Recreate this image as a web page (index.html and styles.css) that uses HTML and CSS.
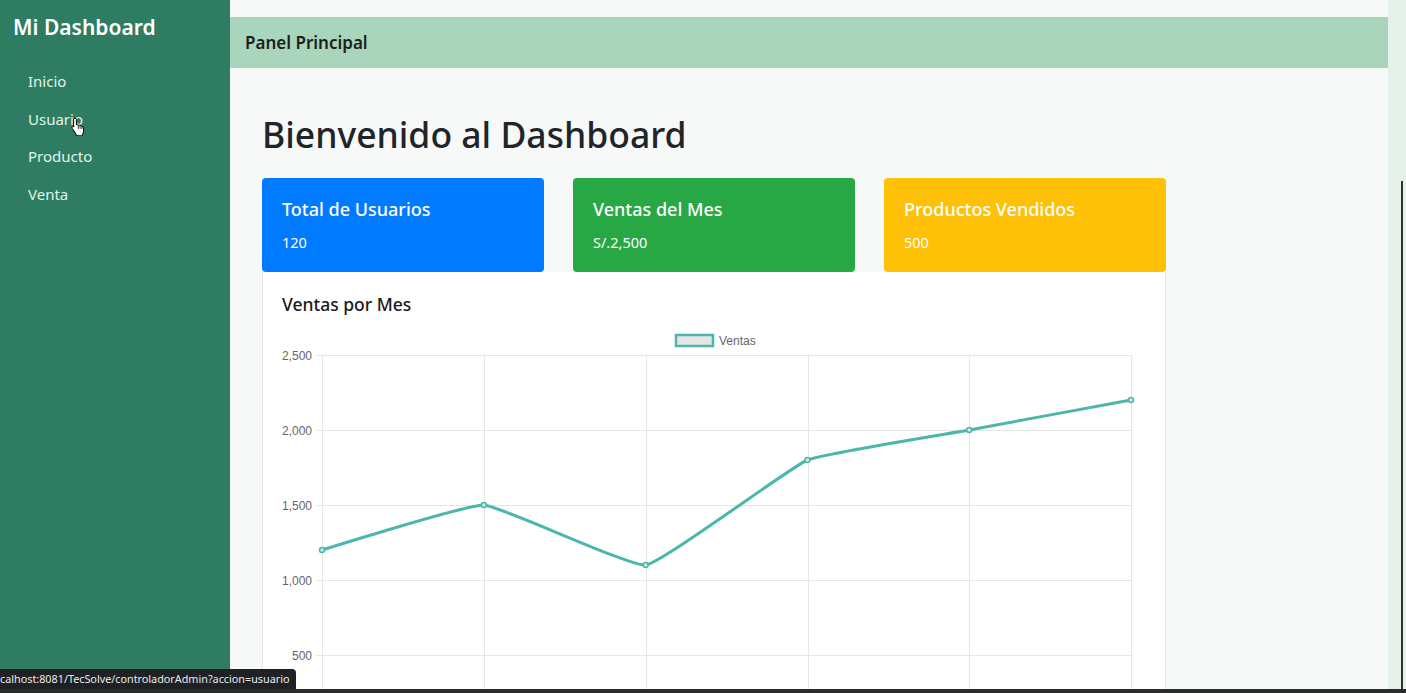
FILE: index.html
```html
<!DOCTYPE html>
<html lang="es">
<head>
<meta charset="utf-8">
<title>Mi Dashboard</title>
<link rel="stylesheet" href="styles.css">
</head>
<body>
<aside class="sidebar">
  <h2 class="brand">Mi Dashboard</h2>
  <nav class="nav">
    <a class="nav-link" href="#">Inicio</a>
    <a class="nav-link hovered" href="#">Usuario<svg class="cursor" width="14" height="19" viewBox="0 0 14 19"><path d="M4 1.2c.8 0 1.4.6 1.4 1.4v5.2l.3-.1c.7-.2 1.4.1 1.6.7.5-.4 1.3-.4 1.8.1.5-.3 1.3-.1 1.6.5l.4.2c.9.3 1.4 1 1.4 1.9v3.2c0 1.2-.4 2.1-1 2.9v1.6H5.2v-1.4L1.5 11.8c-.6-.6-.6-1.4-.1-1.9.5-.5 1.3-.5 1.8 0l-.6-.6V2.6C2.6 1.8 3.2 1.2 4 1.2z" fill="#fff" stroke="#000" stroke-width="1"/><path d="M7.3 8.3v3.5M9.1 8.8v3M10.9 9.4v2.6" stroke="#000" stroke-width=".8"/></svg></a>
    <a class="nav-link" href="#">Producto</a>
    <a class="nav-link" href="#">Venta</a>
  </nav>
</aside>
<main class="main">
  <header class="topbar"><span class="topbar-title">Panel Principal</span></header>
  <section class="content">
    <h1 class="page-title">Bienvenido al Dashboard</h1>
    <div class="stats">
      <div class="stat stat-blue"><h5 class="stat-title">Total de Usuarios</h5><p class="stat-value">120</p></div>
      <div class="stat stat-green"><h5 class="stat-title">Ventas del Mes</h5><p class="stat-value">S/.2,500</p></div>
      <div class="stat stat-yellow"><h5 class="stat-title">Productos Vendidos</h5><p class="stat-value">500</p></div>
    </div>
    <div class="chart-card">
      <h5 class="chart-title">Ventas por Mes</h5>
      <svg class="chart" width="864" height="420" viewBox="0 0 864 420">
        <g class="legend">
          <rect x="394" y="10" width="37" height="11" fill="#e3e6e6" stroke="#4db6ac" stroke-width="2.5"/>
          <text x="437" y="19.5" class="tick">Ventas</text>
        </g>
        <g stroke="#e6e6e6" stroke-width="1">
          <line x1="34" y1="30.5" x2="849" y2="30.5"/>
          <line x1="34" y1="105.5" x2="849" y2="105.5"/>
          <line x1="34" y1="180.5" x2="849" y2="180.5"/>
          <line x1="34" y1="255.5" x2="849" y2="255.5"/>
          <line x1="34" y1="330.5" x2="849" y2="330.5"/>
          <line x1="34" y1="405.5" x2="849" y2="405.5"/>
          <line x1="40.5" y1="30" x2="40.5" y2="420"/>
          <line x1="202.5" y1="30" x2="202.5" y2="420"/>
          <line x1="364.5" y1="30" x2="364.5" y2="420"/>
          <line x1="526.5" y1="30" x2="526.5" y2="420"/>
          <line x1="687.5" y1="30" x2="687.5" y2="420"/>
          <line x1="849.5" y1="30" x2="849.5" y2="420"/>
        </g>
        <g class="tick" text-anchor="end">
          <text x="30" y="34.5">2,500</text>
          <text x="30" y="109.5">2,000</text>
          <text x="30" y="184.5">1,500</text>
          <text x="30" y="259.5">1,000</text>
          <text x="30" y="334.5">500</text>
        </g>
        <path d="M40,225 C40,225 185.85,179.26 201.8,180 C218.2,180.76 348.33,242.12 363.6,240 C380.69,237.62 507.93,142.29 525.4,135 C540.29,128.79 671.02,108 687.2,105 C703.38,102 849,75 849,75" fill="none" stroke="#4db6ac" stroke-width="3"/>
        <g fill="#c9ecea" stroke="#4db6ac" stroke-width="1.5">
          <circle cx="40" cy="225" r="2.5"/>
          <circle cx="201.8" cy="180" r="2.5"/>
          <circle cx="363.6" cy="240" r="2.5"/>
          <circle cx="525.4" cy="135" r="2.5"/>
          <circle cx="687.2" cy="105" r="2.5"/>
          <circle cx="849" cy="75" r="2.5"/>
        </g>
      </svg>
    </div>
  </section>
</main>
<div class="gutter"></div>
<div class="status-url">calhost:8081/TecSolve/controladorAdmin?accion=usuario</div>
<div class="frame-right"></div>
<div class="frame-bottom"></div>
</body>
</html>
```
FILE: styles.css
```css
* { box-sizing: border-box; }
html, body { height: 100%; }
body {
  margin: 0;
  display: flex;
  overflow: hidden;
  font-family: "Noto Sans", "Open Sans", sans-serif;
  background: #f7f9f8;
  color: #212529;
}
.sidebar {
  width: 230px;
  flex: none;
  background: #2e7d62;
  padding: 12px 13px;
}
.brand {
  margin: 0 0 21px;
  font-size: 21px;
  line-height: 30px;
  font-weight: 600;
  color: #ffffff;
}
.nav { display: flex; flex-direction: column; }
.nav-link {
  position: relative;
  display: block;
  padding: 7px 15px;
  font-size: 15px;
  line-height: 23.5px;
  color: #e2f3ea;
  text-decoration: none;
}
.cursor { position: absolute; left: 58px; top: 16px; }
.main {
  flex: 1;
  padding-top: 17px;
  background: #f7f9f8;
}
.topbar {
  height: 51px;
  background: #a8d5bc;
  display: flex;
  align-items: center;
  padding-left: 15px;
}
.topbar-title { font-size: 17px; font-weight: 600; color: #1b1f1c; }
.content { padding: 0 32px; width: 968px; }
.page-title {
  margin: 42px 0 20px;
  font-size: 35.5px;
  line-height: 48px;
  font-weight: 500;
  color: #212529;
}
.stats {
  display: grid;
  grid-template-columns: repeat(3, 282px);
  gap: 29px;
}
.stat {
  height: 94px;
  border-radius: 4px;
  padding: 19px 20px;
  color: #fff;
}
.stat-blue { background: #007bff; }
.stat-green { background: #28a745; }
.stat-yellow { background: #ffc107; }
.stat-title {
  margin: 0 0 9px;
  font-size: 18px;
  line-height: 24px;
  font-weight: 500;
}
.stat-value { margin: 0; font-size: 14.5px; line-height: 24px; }
.chart-card {
  width: 904px;
  height: 440px;
  background: #fff;
  border: 1px solid #e8e8e8;
  border-top: none;
  padding: 20px 19px 0;
}
.chart-title {
  margin: 0 0 9px;
  font-size: 17.5px;
  line-height: 24px;
  font-weight: 500;
  color: #1a1a1a;
}
.chart { display: block; }
.tick { font-family: "Liberation Sans", Arial, sans-serif; font-size: 12px; fill: #666; }
.gutter { width: 18px; flex: none; background: #e7f1ec; }
.status-url {
  position: absolute;
  left: 0;
  bottom: 4px;
  height: 20px;
  padding: 0 6px 0 0;
  background: #202124;
  color: #e8eaed;
  font-size: 10.8px;
  line-height: 20px;
  border-top-right-radius: 4px;
}
.frame-right {
  position: absolute;
  right: 3px;
  top: 181px;
  bottom: 4px;
  width: 2px;
  background: #2f332f;
}
.frame-bottom {
  position: absolute;
  left: 0;
  right: 0;
  bottom: 0;
  height: 4px;
  background: #2b2d2c;
}
```
